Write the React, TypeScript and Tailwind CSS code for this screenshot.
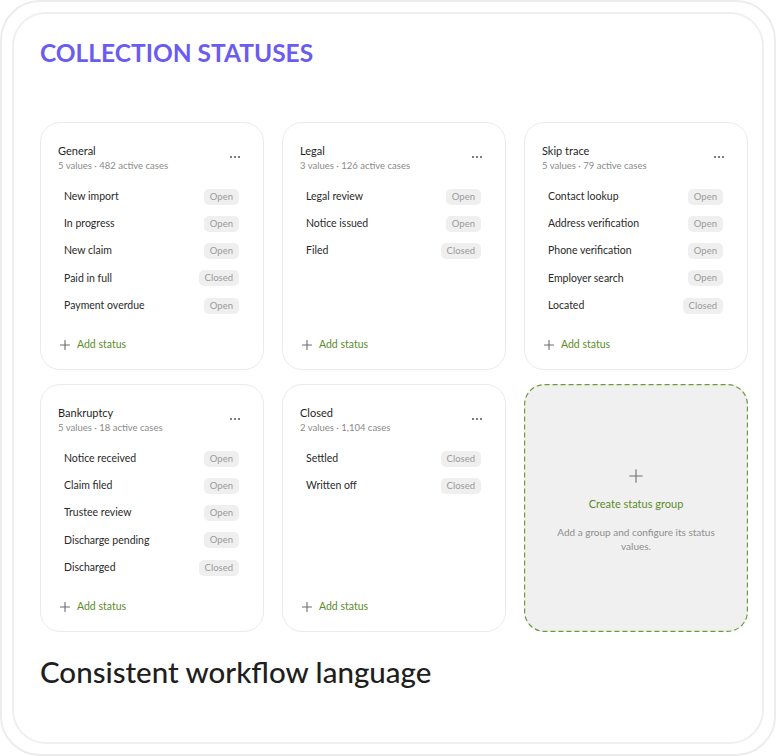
import React from "react";

type Status = { name: string; state: "Open" | "Closed" };
type Group = { title: string; sub: string; items: Status[] };

const groups: Group[] = [
  {
    title: "General",
    sub: "5 values · 482 active cases",
    items: [
      { name: "New import", state: "Open" },
      { name: "In progress", state: "Open" },
      { name: "New claim", state: "Open" },
      { name: "Paid in full", state: "Closed" },
      { name: "Payment overdue", state: "Open" },
    ],
  },
  {
    title: "Legal",
    sub: "3 values · 126 active cases",
    items: [
      { name: "Legal review", state: "Open" },
      { name: "Notice issued", state: "Open" },
      { name: "Filed", state: "Closed" },
    ],
  },
  {
    title: "Skip trace",
    sub: "5 values · 79 active cases",
    items: [
      { name: "Contact lookup", state: "Open" },
      { name: "Address verification", state: "Open" },
      { name: "Phone verification", state: "Open" },
      { name: "Employer search", state: "Open" },
      { name: "Located", state: "Closed" },
    ],
  },
  {
    title: "Bankruptcy",
    sub: "5 values · 18 active cases",
    items: [
      { name: "Notice received", state: "Open" },
      { name: "Claim filed", state: "Open" },
      { name: "Trustee review", state: "Open" },
      { name: "Discharge pending", state: "Open" },
      { name: "Discharged", state: "Closed" },
    ],
  },
  {
    title: "Closed",
    sub: "2 values · 1,104 cases",
    items: [
      { name: "Settled", state: "Closed" },
      { name: "Written off", state: "Closed" },
    ],
  },
];

function Plus({ size = 10, color = "#6b6b6b" }: { size?: number; color?: string }) {
  return (
    <svg width={size} height={size} viewBox="0 0 10 10" fill="none">
      <path d="M5 0.5V9.5M0.5 5H9.5" stroke={color} strokeWidth={size > 10 ? 0.8 : 1.1} strokeLinecap="round" />
    </svg>
  );
}

function Dots() {
  return (
    <svg width="12" height="4" viewBox="0 0 12 4" fill="#555">
      <circle cx="2" cy="2" r="1" />
      <circle cx="6" cy="2" r="1" />
      <circle cx="10" cy="2" r="1" />
    </svg>
  );
}

function Card({ g }: { g: Group }) {
  return (
    <div className="h-[248px] rounded-[20px] border border-[#ebebeb] bg-white pt-[20px] pl-[17px] pr-[18px] pb-[16px] flex flex-col">
      <div className="flex items-start justify-between">
        <div>
          <div className="text-[11px] leading-[16px] text-[#1f1f1f]">{g.title}</div>
          <div className="text-[9.5px] leading-[14px] text-[#8a8a8a]">{g.sub}</div>
        </div>
        <div className="pt-[12px] pr-[4px]">
          <Dots />
        </div>
      </div>
      <div className="mt-[10px] flex flex-col">
        {g.items.map((it) => (
          <div key={it.name} className="h-[27.25px] flex items-center justify-between px-[6px]">
            <span className="text-[10.5px] text-[#2a2a2a]">{it.name}</span>
            <span className="h-[16px] px-[6px] rounded-[5px] bg-[#efefef] text-[9.5px] leading-[16px] text-[#9a9a9a]">
              {it.state}
            </span>
          </div>
        ))}
      </div>
      <div className="mt-auto flex items-center gap-[7px] pl-[2px] h-[16px]">
        <Plus />
        <span className="text-[10.5px] text-[#5b8c2a]">Add status</span>
      </div>
    </div>
  );
}

export default function App() {
  return (
    <div
      className="w-[776px] h-[756px] bg-white"
      style={{ fontFamily: "Lato, 'Noto Sans', sans-serif" }}
    >
      <div className="w-full h-full rounded-[40px] border-2 border-[#ececec] p-[10px]">
        <div className="w-full h-full rounded-[34px] border-2 border-[#efefef] pt-[24px] pl-[26px]">
          <h1 className="text-[24.5px] leading-[30px] font-bold text-[#6b5cf0]">
            COLLECTION STATUSES
          </h1>
          <div className="mt-[54px] grid grid-cols-[224px_224px_224px] gap-x-[18px] gap-y-[14px]">
            {groups.map((g) => (
              <Card key={g.title} g={g} />
            ))}
            <div className="relative h-[248px] rounded-[20px] bg-[#f0f0f0] flex flex-col items-center justify-center px-[24px] text-center">
              <svg className="absolute inset-0" width="224" height="248" viewBox="0 0 224 248" fill="none">
                <rect
                  x="0.6"
                  y="0.6"
                  width="222.8"
                  height="246.8"
                  rx="20"
                  stroke="#6e9c3c"
                  strokeWidth="1.2"
                  strokeDasharray="5 3"
                />
              </svg>
              <div className="relative flex flex-col items-center pt-[6px]">
                <Plus size={14} color="#707070" />
                <div className="mt-[13px] text-[11px] text-[#5b8c2a]">Create status group</div>
                <div className="mt-[12px] text-[10px] leading-[14px] text-[#8e8e8e]">
                  Add a group and configure its status values.
                </div>
              </div>
            </div>
          </div>
          <h2 className="mt-[22px] text-[29.5px] leading-[36px] text-[#1f1f1f] font-medium">
            Consistent workflow language
          </h2>
        </div>
      </div>
    </div>
  );
}
